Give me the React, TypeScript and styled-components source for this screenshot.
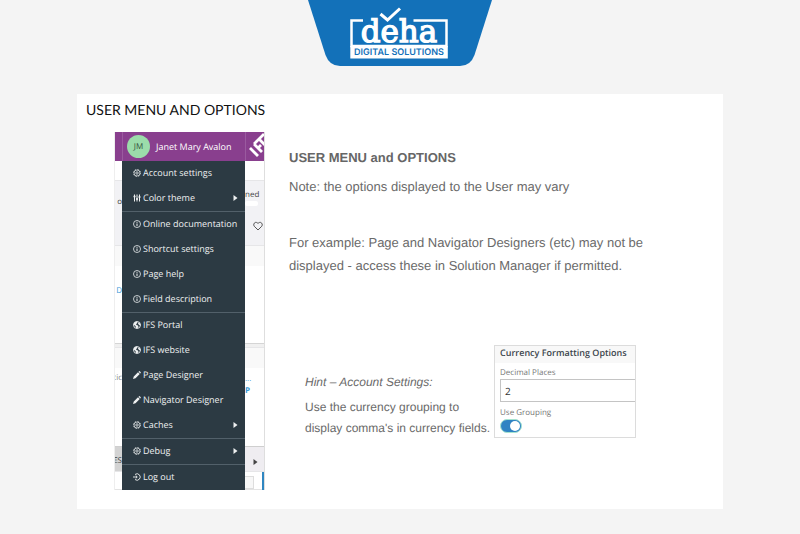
import React from "react";
import styled, { createGlobalStyle } from "styled-components";

const GlobalStyle = createGlobalStyle`
  *, *::before, *::after { box-sizing: border-box; }
  body {
    margin: 0;
    background: #f4f4f4;
    font-family: "Liberation Sans", Arial, sans-serif;
    text-rendering: geometricPrecision;
  }
  h1, h2, h3, p, ul { margin: 0; padding: 0; }
  button, input { font: inherit; color: inherit; text-rendering: inherit; }
`;

const Page = styled.div`
  min-height: 100vh;
  display: flex;
  flex-direction: column;
  align-items: center;
  background: #f4f4f4;
`;

const Brand = styled.header`
  height: 67px;
  svg { display: block; }
`;

const Slide = styled.main`
  width: calc(100% - 154px);
  margin: 27px 0 24px;
  padding: 7px 10px 19px 9px;
  background: #fff;
`;

const SlideTitle = styled.h1`
  font: 400 14px/18px Lato, Carlito, sans-serif;
  color: #111;
`;

const Columns = styled.div`
  display: flex;
  align-items: flex-start;
  gap: 24px;
  margin: 13px 0 0 28px;
`;

/* Application window */
const AppWindow = styled.section`
  position: relative;
  flex: none;
  width: 151px;
  overflow: hidden;
  font-family: "Open Sans", "Noto Sans", sans-serif;
  border-right: 1px solid #dedede;
  border-left: 1px solid #eee;
`;

const AppBar = styled.div`
  display: flex;
  height: 29px;
  background: #893f8e;
  color: #fff;
`;

const BarEdge = styled.div`
  width: 8px;
  flex: none;
  border-right: 1px solid #9a5a9f;
`;

const UserButton = styled.button`
  display: flex;
  align-items: center;
  gap: 6px;
  flex: none;
  width: 123px;
  padding: 0 0 0 4px;
  border: 0;
  border-right: 1px solid #9a5a9f;
  background: none;
  font-size: 9px;
  font-weight: 500;
  white-space: nowrap;
`;

const Avatar = styled.span`
  display: grid;
  place-items: center;
  width: 23px;
  height: 23px;
  border-radius: 50%;
  background: #9bdcaa;
  color: #35513d;
  font-size: 8px;
`;

const Band = styled.div<{ $h: number; $bg?: string; $line?: string }>`
  display: flex;
  justify-content: space-between;
  height: ${(p) => p.$h}px;
  background: ${(p) => p.$bg ?? "#fff"};
  border-bottom: 1px solid ${(p) => p.$line ?? "#e6e6e8"};
  font-size: 8px;
  line-height: 12px;
  color: #444;
`;

const Gutter = styled.div<{ $top?: number; $color?: string; $right?: boolean; $bg?: string }>`
  width: ${(p) => (p.$right ? 19 : 7)}px;
  padding-top: ${(p) => p.$top ?? 0}px;
  overflow: hidden;
  white-space: nowrap;
  color: ${(p) => p.$color ?? "#444"};
  background: ${(p) => p.$bg ?? "transparent"};
  display: flex;
  flex-direction: column;
  align-items: ${(p) => (p.$right ? "flex-start" : "flex-end")};
  flex: none;
`;

const Field = styled.div`
  width: 13px;
  height: 5px;
  background: #fff;
  border-radius: 2px;
`;

const RightIcon = styled.div<{ $top: number }>`
  display: flex;
  padding: ${(p) => p.$top}px 0 0 8px;
`;

const FootBox = styled.div`
  display: flex;
  justify-content: space-between;
  width: 19px;
  height: 18px;
  border-right: 2px solid #2f86c1;
  &::before {
    content: "";
    width: 9px;
    height: 13px;
    margin-top: 4px;
    border: 1px solid #ddd;
    border-left: 0;
    background: #f7f7f7;
  }
`;

const Menu = styled.nav`
  position: absolute;
  top: 29px;
  bottom: 0;
  left: 7px;
  width: 123px;
  background: #2c3a43;
`;

const Group = styled.ul`
  list-style: none;
  & + & { border-top: 1px solid #52606a; }
`;

const MenuButton = styled.button`
  display: flex;
  align-items: center;
  gap: 2px;
  width: 100%;
  height: 25px;
  padding: 0 7px 2px 11px;
  border: 0;
  background: none;
  color: #eef0f1;
  font-size: 9px;
  line-height: 13px;
  text-align: left;
  white-space: nowrap;
  svg { flex: none; }
  span { flex: 1; }
`;

/* Notes */
const Notes = styled.section`
  flex: 1;
  min-width: 0;
  padding-top: 16px;
  color: #6a6a6a;
  font-size: 13px;
  line-height: 23px;
`;

const NotesTitle = styled.h2`
  font-size: 13px;
  line-height: 20px;
  color: #666;
  margin-bottom: 7px;
`;

const Example = styled.p`
  margin-top: 33px;
  max-width: 364px;
`;

const HintRow = styled.div`
  display: flex;
  align-items: flex-start;
  justify-content: space-between;
  margin-top: 68px;
  padding: 0 77px 0 16px;
`;

const Hint = styled.div`
  padding-top: 27px;
  font-size: 12px;
  line-height: 21px;
  white-space: nowrap;
  em { display: block; margin-bottom: 4px; }
`;

const Card = styled.form`
  flex: none;
  width: 142px;
  height: 93px;
  overflow: hidden;
  border: 1px solid #dcdcdc;
  background: #fff;
  font-family: "Open Sans", "Noto Sans", sans-serif;
  color: #777;
  font-size: 8px;
  line-height: 12px;
`;

const CardTitle = styled.h3`
  padding: 0 5px;
  height: 17px;
  background: #f8f8f8;
  color: #3b454c;
  font-size: 9px;
  line-height: 13px;
  font-weight: 600;
  white-space: nowrap;
`;

const CardBody = styled.div`
  padding: 4px 0 0 5px;
  label { display: block; }
`;

const NumberInput = styled.input`
  display: block;
  width: 100%;
  height: 23px;
  margin: 0 0 5px;
  padding: 0 4px;
  border: 1px solid #c4c4c4;
  border-right: 0;
  border-radius: 0;
  background: #fff;
  color: #333;
  font-size: 10px;
`;

const Toggle = styled.input`
  appearance: none;
  display: flex;
  justify-content: flex-end;
  width: 22px;
  height: 14px;
  margin: 0;
  padding: 1px;
  border: 1px solid #a5e3cf;
  border-radius: 7px;
  background: #2f83c3;
  &::before {
    content: "";
    width: 10px;
    height: 10px;
    border-radius: 50%;
    background: #fff;
  }
`;

const Gear = () => (
  <svg width="8" height="8" viewBox="0 0 16 16" fill="none" stroke="currentColor">
    <circle cx="8" cy="8" r="6" strokeWidth="1.4" />
    <circle cx="8" cy="8" r="2.4" strokeWidth="1.6" />
    <circle cx="8" cy="8" r="7.2" strokeWidth="1.4" strokeDasharray="2.83 2.83" />
  </svg>
);
const Info = () => (
  <svg width="8" height="8" viewBox="0 0 16 16" fill="none" stroke="currentColor">
    <circle cx="8" cy="8" r="7" strokeWidth="1.6" />
    <path d="M8 7v5M8 3.8v1.8" strokeWidth="2" />
  </svg>
);
const Sliders = () => (
  <svg width="8" height="8" viewBox="0 0 16 16" fill="none" stroke="currentColor" strokeWidth="2">
    <path d="M3 1v14M8 1v14M13 1v14" />
    <path d="M1 5h4M6 10h4M11 6h4" strokeWidth="3" />
  </svg>
);
const Globe = () => (
  <svg width="8" height="8" viewBox="0 0 16 16">
    <circle cx="8" cy="8" r="7" fill="none" stroke="currentColor" strokeWidth="1.8" />
    <path d="M2 4l4-3 3 1-1 3-2 1 1 2 3 1 1 3-3 3-2-1-1-4-4-3zM11 3l3 2 1 4-3-1-2-3z" fill="currentColor" />
  </svg>
);
const Pencil = () => (
  <svg width="8" height="8" viewBox="0 0 16 16" fill="currentColor">
    <path d="M0 16L1.500 11L10 2.500L13.500 6L5 14.500zM11 1.600L12.300 .4Q13 0 13.700 .5L15.500 2.300Q16 3 15.500 3.700L14.400 5z" />
  </svg>
);
const Logout = () => (
  <svg width="8" height="8" viewBox="0 0 16 16" fill="none" stroke="currentColor" strokeWidth="1.8">
    <path d="M4 3a6.400 6.400 0 1 1 0 10M0 8h8M5.500 5.200L8.500 8l-3 2.800" />
  </svg>
);
const Caret = () => (
  <svg width="5" height="6" viewBox="0 0 5 6"><path d="M0.500 0L4.500 3L0.500 6z" fill="currentColor" /></svg>
);

type Item = { label: string; icon: React.FC; sub?: boolean };
const groups: Item[][] = [
  [
    { label: "Account settings", icon: Gear },
    { label: "Color theme", icon: Sliders, sub: true },
  ],
  [
    { label: "Online documentation", icon: Info },
    { label: "Shortcut settings", icon: Info },
    { label: "Page help", icon: Info },
    { label: "Field description", icon: Info },
  ],
  [
    { label: "IFS Portal", icon: Globe },
    { label: "IFS website", icon: Globe },
    { label: "Page Designer", icon: Pencil },
    { label: "Navigator Designer", icon: Pencil },
    { label: "Caches", icon: Gear, sub: true },
  ],
  [{ label: "Debug", icon: Gear, sub: true }],
  [{ label: "Log out", icon: Logout }],
];

const Logo = () => (
  <svg width="184" height="67" viewBox="0 0 184 67" role="img" aria-label="deha Digital Solutions">
    <path d="M0 0H184L166.500 55Q162.500 66 152 66H32Q21.500 66 17.500 55z" fill="#1371b9" />
    <path d="M55 20.500H43.500V46H138.500V20.500H105.500" fill="none" stroke="#fff" strokeWidth="2.500" />
    <rect x="42.300" y="46" width="97.500" height="12.500" fill="#fff" />
    <text x="91" y="42" textAnchor="middle" fill="#fff" stroke="#fff" strokeWidth="1.300" fontFamily="DejaVu Serif" fontSize="31">deha</text>
    <path d="M72.500 14L79.500 20L92 8.500" fill="none" stroke="#fff" strokeWidth="3" />
    <text x="91" y="55" textAnchor="middle" fill="#1371b9" fontFamily="Inter" fontWeight="600" fontSize="9">DIGITAL SOLUTIONS</text>
  </svg>
);

export default function App() {
  return (
    <Page>
      <GlobalStyle />
      <Brand><Logo /></Brand>
      <Slide>
        <SlideTitle>USER MENU AND OPTIONS</SlideTitle>
        <Columns>
          <AppWindow>
            <AppBar>
              <BarEdge />
              <UserButton type="button"><Avatar>JM</Avatar>Janet Mary Avalon</UserButton>
              <svg width="18" height="29" viewBox="0 0 18 29" fill="none" stroke="#fff" strokeWidth="2.800">
                <path d="M4 16L12 24M8 12L16 20M8 12L13 7M12 16L15 13M13 7L20 14M13 7L18 2" />
              </svg>
            </AppBar>
            <Band $h={20} />
            <Band $h={65} $bg="#f2f2f5">
              <Gutter $top={15}>o</Gutter>
              <Gutter $right $top={8}>
                ned
                <Field />
                <RightIcon $top={15}>
                  <svg width="10" height="10" viewBox="0 0 20 20" fill="none" stroke="#444" strokeWidth="1.800">
                    <path d="M10 18L2.500 10.500C-1 6 5-1 10 5C15-1 21 6 17.500 10.500z" />
                  </svg>
                </RightIcon>
              </Gutter>
            </Band>
            <Band $h={20} $bg="#f9f9f9" $line="#f9f9f9" />
            <Band $h={78} $line="#d5d5d5"><Gutter $top={19} $color="#3a9bd8">D</Gutter></Band>
            <Band $h={4} $bg="#f0f0f0" />
            <Band $h={20} $bg="#f9f9f9" $line="#f9f9f9" />
            <Band $h={79} $line="#cfcfcf">
              <Gutter $top={4} $color="#888">tic</Gutter>
              <Gutter $right $top={5} $color="#3a9bd8">...<b>P</b></Gutter>
            </Band>
            <Band $h={25} $bg="#efedf1">
              <Gutter $top={8} $bg="#d3d3d3">ES</Gutter>
              <Gutter $right><RightIcon $top={12}><Caret /></RightIcon></Gutter>
            </Band>
            <Band $h={18} $line="#e3e3e3"><Gutter /><FootBox /></Band>
            <Menu aria-label="User menu">
              {groups.map((items, i) => (
                <Group key={i}>
                  {items.map(({ label, icon: Icon, sub }) => (
                    <li key={label}>
                      <MenuButton type="button"><Icon /><span>{label}</span>{sub && <Caret />}</MenuButton>
                    </li>
                  ))}
                </Group>
              ))}
            </Menu>
          </AppWindow>
          <Notes>
            <NotesTitle>USER MENU and OPTIONS</NotesTitle>
            <p>Note: the options displayed to the User may vary</p>
            <Example>For example: Page and Navigator Designers (etc) may not be displayed - access these in Solution Manager if permitted.</Example>
            <HintRow>
              <Hint>
                <em>Hint – Account Settings:</em>
                <p>Use the currency grouping to<br />display comma's in currency fields.</p>
              </Hint>
              <Card>
                <CardTitle>Currency Formatting Options</CardTitle>
                <CardBody>
                  <label htmlFor="places">Decimal Places</label>
                  <NumberInput id="places" defaultValue="2" />
                  <label htmlFor="grouping">Use Grouping</label>
                  <Toggle id="grouping" type="checkbox" role="switch" defaultChecked />
                </CardBody>
              </Card>
            </HintRow>
          </Notes>
        </Columns>
      </Slide>
    </Page>
  );
}
